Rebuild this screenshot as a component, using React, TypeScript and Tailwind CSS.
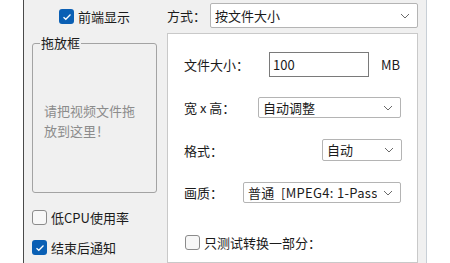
import React from "react";

const Chevron = () => (
  <svg width="10" height="6" viewBox="0 0 10 6" className="shrink-0">
    <path d="M1 1 L5 5 L9 1" fill="none" stroke="#6a6a6a" strokeWidth="1" />
  </svg>
);

const Check = ({ checked }: { checked?: boolean }) =>
  checked ? (
    <span className="w-[15px] h-[15px] shrink-0 rounded-[3px] bg-[#0a5fb4] flex items-center justify-center">
      <svg width="10" height="8" viewBox="0 0 10 8">
        <path d="M1.5 4.2 L3.8 6.3 L8.5 1.5" fill="none" stroke="#fff" strokeWidth="1.3" />
      </svg>
    </span>
  ) : (
    <span className="w-[15px] h-[15px] shrink-0 rounded-[3px] border border-[#8b8b8b] bg-[#f7f7f7]" />
  );

const Combo = ({ text, className }: { text: string; className: string }) => (
  <div
    className={`flex items-center bg-white border border-[#b4b4b4] rounded-[2px] pl-[4px] pr-[7px] ${className}`}
  >
    <span className="flex-1 mr-[6px] overflow-hidden whitespace-pre leading-[18px]">{text}</span>
    <Chevron />
  </div>
);

export default function App() {
  return (
    <div className="w-[450px] h-[263px] flex bg-white overflow-hidden font-['Noto_Sans_CJK_SC',sans-serif] text-[13px] text-[#1b1b1b] leading-none">
      <div className="w-[23px] shrink-0 bg-white" />
      <div className="w-[404px] shrink-0 flex bg-[#f0f0f0] border-l border-l-[#4a4a4a] border-r border-r-[#c8cfd6]">
        {/* left column */}
        <div className="w-[143px] shrink-0 pl-[8px] flex flex-col">
          <div className="mt-[9px] ml-[27px] h-[15px] flex items-center gap-[4px]">
            <Check checked />
            <span>前端显示</span>
          </div>
          <fieldset className="mt-[11px] w-[125px] h-[158px] border border-[#a3a3a3] rounded-[3px]">
            <legend className="ml-[7px] px-[1px] leading-[16px]">拖放框</legend>
            <p className="mt-[50px] ml-[11px] w-[94px] leading-[20px] text-[#8c8c8c]">
              请把视频文件拖放到这里！
            </p>
          </fieldset>
          <div className="mt-[17px] h-[15px] flex items-center gap-[4px]">
            <Check />
            <span>低CPU使用率</span>
          </div>
          <div className="mt-[15px] h-[15px] flex items-center gap-[4px]">
            <Check checked />
            <span>结束后通知</span>
          </div>
        </div>

        {/* right column */}
        <div className="w-[251px] shrink-0 flex flex-col">
          <div className="mt-[3px] h-[25px] flex items-center">
            <span>方式：</span>
            <Combo text="按文件大小" className="ml-auto w-[208px] h-[25px] pr-[6px]" />
          </div>
          <div className="mt-[5px] flex-1 bg-white border border-[#c9c9c9] pl-[16px] pr-[15px] flex flex-col">
            <div className="mt-[18px] h-[25px] flex items-center">
              <span className="w-[85px]">文件大小：</span>
              <div className="w-[100px] h-[25px] border border-[#7a7a7a] bg-white flex items-center pl-[3px]">
                100
              </div>
              <span className="ml-[12px]">MB</span>
            </div>
            <div className="mt-[20px] h-[21px] flex items-center">
              <span className="w-[74px]">宽 x 高：</span>
              <Combo text="自动调整" className="w-[143px] h-[21px]" />
            </div>
            <div className="mt-[21px] h-[22px] flex items-center justify-between">
              <span>格式：</span>
              <Combo text="自动" className="w-[80px] h-[22px]" />
            </div>
            <div className="mt-[21px] h-[21px] flex items-center">
              <span className="w-[59px]">画质：</span>
              <Combo text="普通  [MPEG4: 1-Pass]" className="w-[158px] h-[21px] tracking-[0.3px]" />
            </div>
            <div className="mt-[32px] ml-[1px] h-[15px] flex items-center gap-[4px]">
              <Check />
              <span>只测试转换一部分：</span>
            </div>
          </div>
        </div>
      </div>
      <div className="flex-1 bg-white" />
    </div>
  );
}
